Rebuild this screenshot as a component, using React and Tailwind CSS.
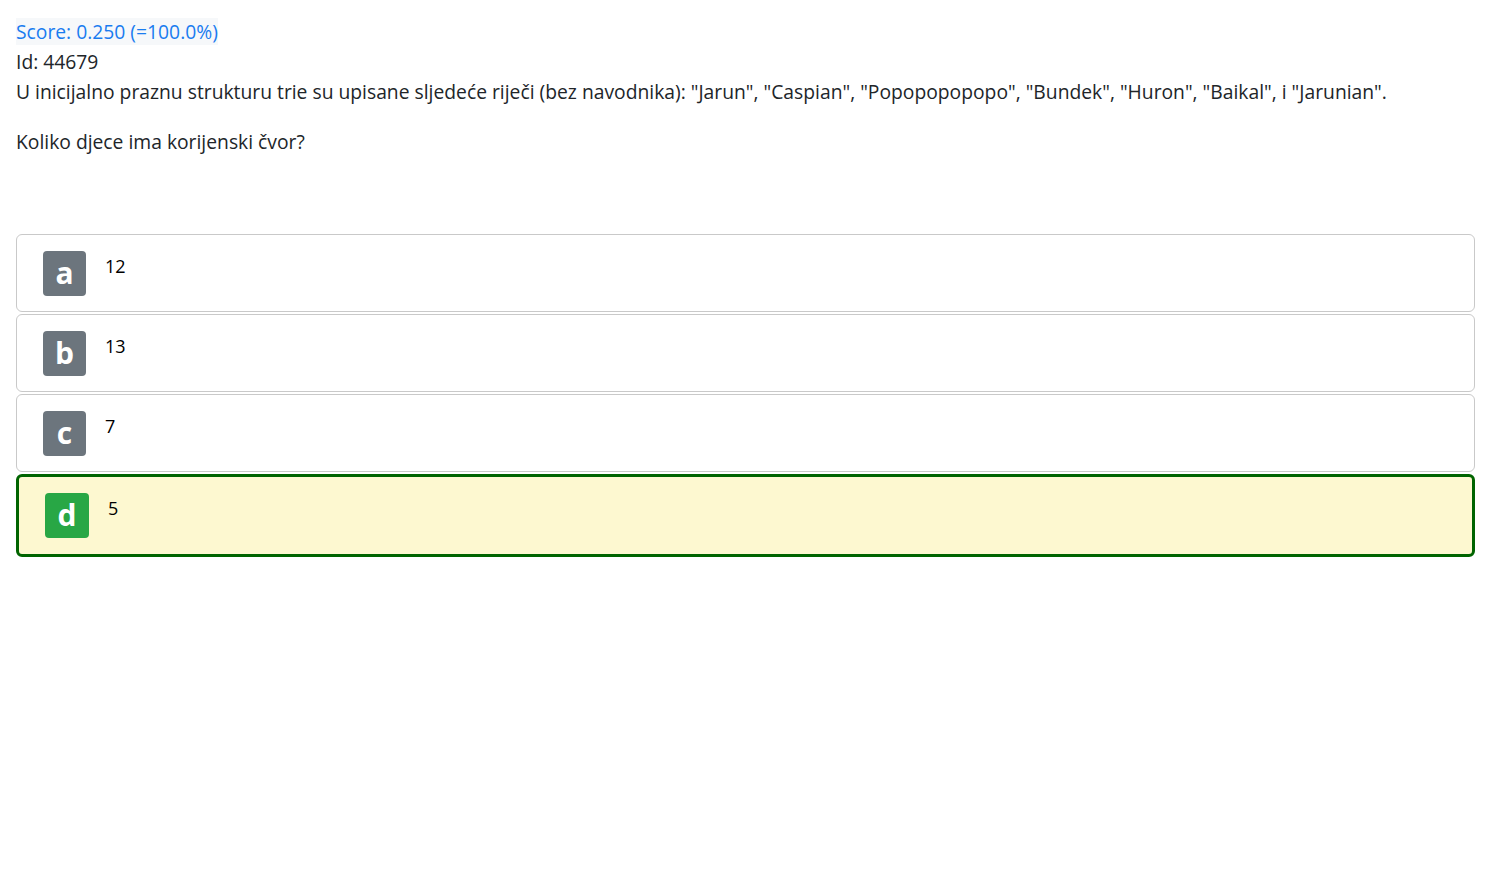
import React from "react";

const options = [
  { l: "a", t: "12" },
  { l: "b", t: "13" },
  { l: "c", t: "7" },
  { l: "d", t: "5", sel: true },
];

export default function App() {
  return (
    <div className="min-h-[896px] bg-white pl-4 pr-[31px] pt-[17px] text-[#212529]" style={{ fontFamily: '"Open Sans", "Noto Sans", sans-serif' }}>
      <div className="text-[19.3px] leading-[30px]">
        <div>
          <span className="bg-[#f6f8fa] text-[#1a7cf0]">Score: 0.250 (=100.0%)</span>
        </div>
        <div>Id: 44679</div>
        <p className="mb-[20px]">
          U inicijalno praznu strukturu trie su upisane sljedeće riječi (bez navodnika): "Jarun", "Caspian", "Popopopopopo", "Bundek", "Huron", "Baikal", i "Jarunian".
        </p>
        <p>Koliko djece ima korijenski čvor?</p>
      </div>
      <div className="mt-[77px] flex flex-col gap-[2px]">
        {options.map((o) =>
          o.sel ? (
            <div key={o.l} className="flex items-start rounded-[6px] border-[3px] border-[#006400] bg-[#fdf8d0] pl-[26px] pt-[16px] pb-[16px]">
              <div className="flex h-[45px] w-[44px] items-center justify-center rounded-[4px] bg-[#28a745] pb-[2px] text-[30px] font-bold text-white">{o.l}</div>
              <div className="ml-[19px] mt-[2px] text-[18px] leading-[27px] text-black">{o.t}</div>
            </div>
          ) : (
            <div key={o.l} className="flex items-start rounded-[6px] border border-[#c9c9c9] bg-white pl-[26px] pt-[16px] pb-[15px]">
              <div className="flex h-[45px] w-[43px] items-center justify-center rounded-[4px] bg-[#6c757d] pb-[2px] text-[30px] font-bold text-white">{o.l}</div>
              <div className="ml-[19px] mt-[2px] text-[18px] leading-[27px] text-black">{o.t}</div>
            </div>
          )
        )}
      </div>
    </div>
  );
}
